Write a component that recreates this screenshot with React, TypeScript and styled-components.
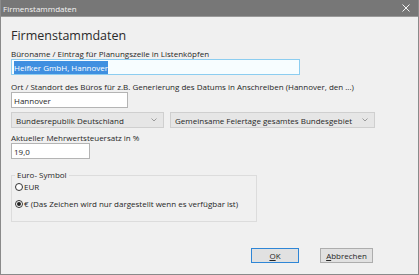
import React from 'react';
import styled, { createGlobalStyle } from 'styled-components';

const GlobalStyle = createGlobalStyle`
  html, body {
    margin: 0;
    padding: 0;
    background: #f0f0f0;
  }
  * {
    box-sizing: border-box;
  }
`;

const font = `'Segoe UI', 'Open Sans', 'Noto Sans', sans-serif`;

// Dialog frame
const Window = styled.div`
  width: 419px;
  height: 275px;
  border: 1px solid #8a8a8a;
  border-top: none;
  display: flex;
  flex-direction: column;
  background: #f0f0f0;
  font-family: ${font};
  color: #262626;
  overflow: hidden;
`;

const TitleBar = styled.div`
  height: 17px;
  flex-shrink: 0;
  background: #777777;
  border-bottom: 1px solid #9a9a9a;
  display: flex;
  align-items: center;
  padding: 0 8px 0 2px;
  color: #f4f4f4;
  font-size: 8px;
`;

const TitleText = styled.span`
  flex: 1;
`;

const CloseIcon = styled.svg`
  width: 8px;
  height: 8px;
`;

const Body = styled.div`
  flex: 1;
  display: flex;
  flex-direction: column;
  padding: 11px 10px 0 10px;
`;

const Heading = styled.h1`
  margin: 0 0 5px 0;
  font-size: 12.5px;
  font-weight: 400;
  line-height: 16px;
  color: #2a2a2a;
`;

const Label = styled.div<{ $top?: number }>`
  font-size: 8px;
  line-height: 10px;
  margin-top: ${p => p.$top ?? 0}px;
  white-space: nowrap;
`;

const TextBox = styled.div<{ $width: number; $focused?: boolean }>`
  width: ${p => p.$width}px;
  height: 16px;
  border: 1px solid ${p => (p.$focused ? '#8ccdf0' : '#b4b4b4')};
  background: ${p => (p.$focused ? '#f7fdff' : '#ffffff')};
  font-size: 8px;
  display: flex;
  align-items: center;
  padding: 0 2px;
`;

const Selected = styled.span`
  background: #3f8fe0;
  color: #ffffff;
  padding: 1px 0;
`;

const ComboRow = styled.div`
  display: flex;
  gap: 6px;
  margin-top: 4px;
`;

const Combo = styled.div<{ $width: number }>`
  width: ${p => p.$width}px;
  height: 16px;
  border: 1px solid #cfcfcf;
  background: #e6e6e6;
  font-size: 8px;
  display: flex;
  align-items: center;
  padding: 0 4px 0 4px;
`;

const ComboText = styled.span`
  flex: 1;
`;

const Chevron = styled.svg`
  width: 6px;
  height: 4px;
  margin-right: 2px;
`;

const GroupBox = styled.fieldset`
  width: 246px;
  margin: 11px 0 0 0;
  padding: 0 0 12px 3px;
  border: 1px solid #dcdcdc;
  display: flex;
  flex-direction: column;
`;

const Legend = styled.legend`
  font-size: 8px;
  padding: 0 2px;
  margin-left: 0;
  line-height: 10px;
`;

const RadioRow = styled.label<{ $top: number }>`
  display: flex;
  align-items: center;
  gap: 1px;
  font-size: 8px;
  line-height: 10px;
  margin-top: ${p => p.$top}px;
`;

const RadioCircle = styled.span<{ $checked?: boolean }>`
  width: 8px;
  height: 8px;
  border-radius: 50%;
  border: 1px solid #333;
  background: #fff;
  display: flex;
  align-items: center;
  justify-content: center;
  &::after {
    content: '';
    width: 4px;
    height: 4px;
    border-radius: 50%;
    background: ${p => (p.$checked ? '#222' : 'transparent')};
  }
`;

const ButtonRow = styled.div`
  display: flex;
  justify-content: flex-end;
  gap: 21px;
  margin-top: auto;
  margin-bottom: 11px;
  padding-right: 35px;
`;

const Button = styled.button<{ $width: number; $default?: boolean }>`
  width: ${p => p.$width}px;
  height: 15px;
  padding: 0;
  font-family: ${font};
  font-size: 8px;
  color: #262626;
  background: #e1e1e1;
  border: ${p => (p.$default ? '1.5px solid #2f86d6' : '1px solid #adadad')};
  display: flex;
  align-items: center;
  justify-content: center;
`;

const Mnemonic = styled.span`
  text-decoration: underline;
`;

const App: React.FC = () => {
  return (
    <>
      <GlobalStyle />
      <Window>
        <TitleBar>
          <TitleText>Firmenstammdaten</TitleText>
          <CloseIcon viewBox="0 0 8 8">
            <path d="M0.5 0.5 L7.5 7.5 M7.5 0.5 L0.5 7.5" stroke="#f4f4f4" strokeWidth="1" />
          </CloseIcon>
        </TitleBar>
        <Body>
          <Heading>Firmenstammdaten</Heading>

          <Label>Büroname / Eintrag für Planungszeile in Listenköpfen</Label>
          <TextBox $width={289} $focused>
            <Selected>Heifker GmbH, Hannover</Selected>
          </TextBox>

          <Label $top={7}>
            Ort / Standort des Büros für z.B. Generierung des Datums in Anschreiben (Hannover, den ...)
          </Label>
          <TextBox $width={117}>Hannover</TextBox>

          <ComboRow>
            <Combo $width={153}>
              <ComboText>Bundesrepublik Deutschland</ComboText>
              <Chevron viewBox="0 0 6 4">
                <path d="M0.5 0.5 L3 3 L5.5 0.5" stroke="#888" fill="none" strokeWidth="0.8" />
              </Chevron>
            </Combo>
            <Combo $width={205}>
              <ComboText>Gemeinsame Feiertage gesamtes Bundesgebiet</ComboText>
              <Chevron viewBox="0 0 6 4">
                <path d="M0.5 0.5 L3 3 L5.5 0.5" stroke="#888" fill="none" strokeWidth="0.8" />
              </Chevron>
            </Combo>
          </ComboRow>

          <Label $top={5}>Aktueller Mehrwertsteuersatz in %</Label>
          <TextBox $width={79}>19,0</TextBox>

          <GroupBox>
            <Legend>Euro- Symbol</Legend>
            <RadioRow $top={2}>
              <RadioCircle />
              EUR
            </RadioRow>
            <RadioRow $top={7}>
              <RadioCircle $checked />
              € (Das Zeichen wird nur dargestellt wenn es verfügbar ist)
            </RadioRow>
          </GroupBox>

          <ButtonRow>
            <Button $width={48} $default>
              <Mnemonic>O</Mnemonic>K
            </Button>
            <Button $width={53}>
              <Mnemonic>A</Mnemonic>bbrechen
            </Button>
          </ButtonRow>
        </Body>
      </Window>
    </>
  );
};

export default App;
